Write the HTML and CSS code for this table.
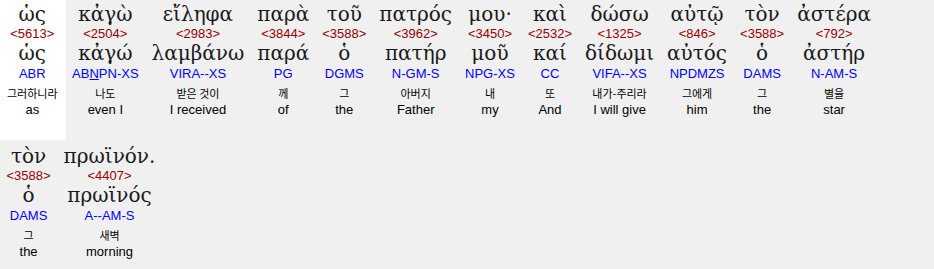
FILE: index.html
```html
<!DOCTYPE html>
<html lang="el">
<head>
<meta charset="utf-8">
<title>Interlinear</title>
<link rel="stylesheet" href="styles.css">
</head>
<body>
<div class="verse">
  <div class="word sel">
    <div class="gk">ὡς</div><div class="num">&lt;5613&gt;</div><div class="lem">ὡς</div>
    <div class="morph">ABR</div><div class="ko">그러하니라</div><div class="en">as</div>
  </div>
  <div class="word">
    <div class="gk">κἀγὼ</div><div class="num">&lt;2504&gt;</div><div class="lem">κἀγώ</div>
    <div class="morph">AB<u>N</u>PN-XS</div><div class="ko">나도</div><div class="en">even I</div>
  </div>
  <div class="word">
    <div class="gk">εἴληφα</div><div class="num">&lt;2983&gt;</div><div class="lem">λαμβάνω</div>
    <div class="morph">VIRA--XS</div><div class="ko">받은 것이</div><div class="en">I received</div>
  </div>
  <div class="word">
    <div class="gk">παρὰ</div><div class="num">&lt;3844&gt;</div><div class="lem">παρά</div>
    <div class="morph">PG</div><div class="ko">께</div><div class="en">of</div>
  </div>
  <div class="word">
    <div class="gk">τοῦ</div><div class="num">&lt;3588&gt;</div><div class="lem">ὁ</div>
    <div class="morph">DGMS</div><div class="ko">그</div><div class="en">the</div>
  </div>
  <div class="word">
    <div class="gk">πατρός</div><div class="num">&lt;3962&gt;</div><div class="lem">πατήρ</div>
    <div class="morph">N-GM-S</div><div class="ko">아버지</div><div class="en">Father</div>
  </div>
  <div class="word">
    <div class="gk">μου·</div><div class="num">&lt;3450&gt;</div><div class="lem">μοῦ</div>
    <div class="morph">NPG-XS</div><div class="ko">내</div><div class="en">my</div>
  </div>
  <div class="word">
    <div class="gk">καὶ</div><div class="num">&lt;2532&gt;</div><div class="lem">καί</div>
    <div class="morph">CC</div><div class="ko">또</div><div class="en">And</div>
  </div>
  <div class="word">
    <div class="gk">δώσω</div><div class="num">&lt;1325&gt;</div><div class="lem">δίδωμι</div>
    <div class="morph">VIFA--XS</div><div class="ko">내가-주리라</div><div class="en">I will give</div>
  </div>
  <div class="word">
    <div class="gk">αὐτῷ</div><div class="num">&lt;846&gt;</div><div class="lem">αὐτός</div>
    <div class="morph">NPDMZS</div><div class="ko">그에게</div><div class="en">him</div>
  </div>
  <div class="word">
    <div class="gk">τὸν</div><div class="num">&lt;3588&gt;</div><div class="lem">ὁ</div>
    <div class="morph">DAMS</div><div class="ko">그</div><div class="en">the</div>
  </div>
  <div class="word">
    <div class="gk">ἀστέρα</div><div class="num">&lt;792&gt;</div><div class="lem">ἀστήρ</div>
    <div class="morph">N-AM-S</div><div class="ko">별을</div><div class="en">star</div>
  </div>
  <div class="word">
    <div class="gk">τὸν</div><div class="num">&lt;3588&gt;</div><div class="lem">ὁ</div>
    <div class="morph">DAMS</div><div class="ko">그</div><div class="en">the</div>
  </div>
  <div class="word">
    <div class="gk">πρωϊνόν.</div><div class="num">&lt;4407&gt;</div><div class="lem">πρωϊνός</div>
    <div class="morph">A--AM-S</div><div class="ko">새벽</div><div class="en">morning</div>
  </div>
</div>
</body>
</html>
```
FILE: styles.css
```css
html, body {
  margin: 0;
  padding: 0;
  background: #f0f0f0;
}

.verse {
  display: flex;
  flex-wrap: wrap;
  row-gap: 2px;
  width: 900px;
}

.word {
  display: flex;
  flex-direction: column;
  align-items: center;
  padding: 2px 6.5px 22px;
  text-align: center;
  white-space: nowrap;
}

.word.sel {
  background: #ffffff;
  padding-left: 7px;
  padding-right: 8px;
}

.gk, .lem {
  font-family: "DejaVu Serif", "Liberation Serif", serif;
  font-size: 20px;
  font-weight: normal;
  color: #1a1a1a;
}

.gk {
  line-height: 24px;
}

.lem {
  line-height: 22px;
}

.num {
  font-family: "Liberation Sans", Arial, sans-serif;
  font-size: 13px;
  line-height: 16px;
  color: #990000;
}

.morph {
  font-family: "Liberation Sans", Arial, sans-serif;
  font-size: 13px;
  line-height: 20px;
  color: #0000ff;
}

.ko {
  font-family: "Noto Sans CJK KR", sans-serif;
  font-size: 11px;
  line-height: 18px;
  color: #000;
}

.en {
  font-family: "Liberation Sans", Arial, sans-serif;
  font-size: 13px;
  line-height: 16px;
  color: #000;
}
```
